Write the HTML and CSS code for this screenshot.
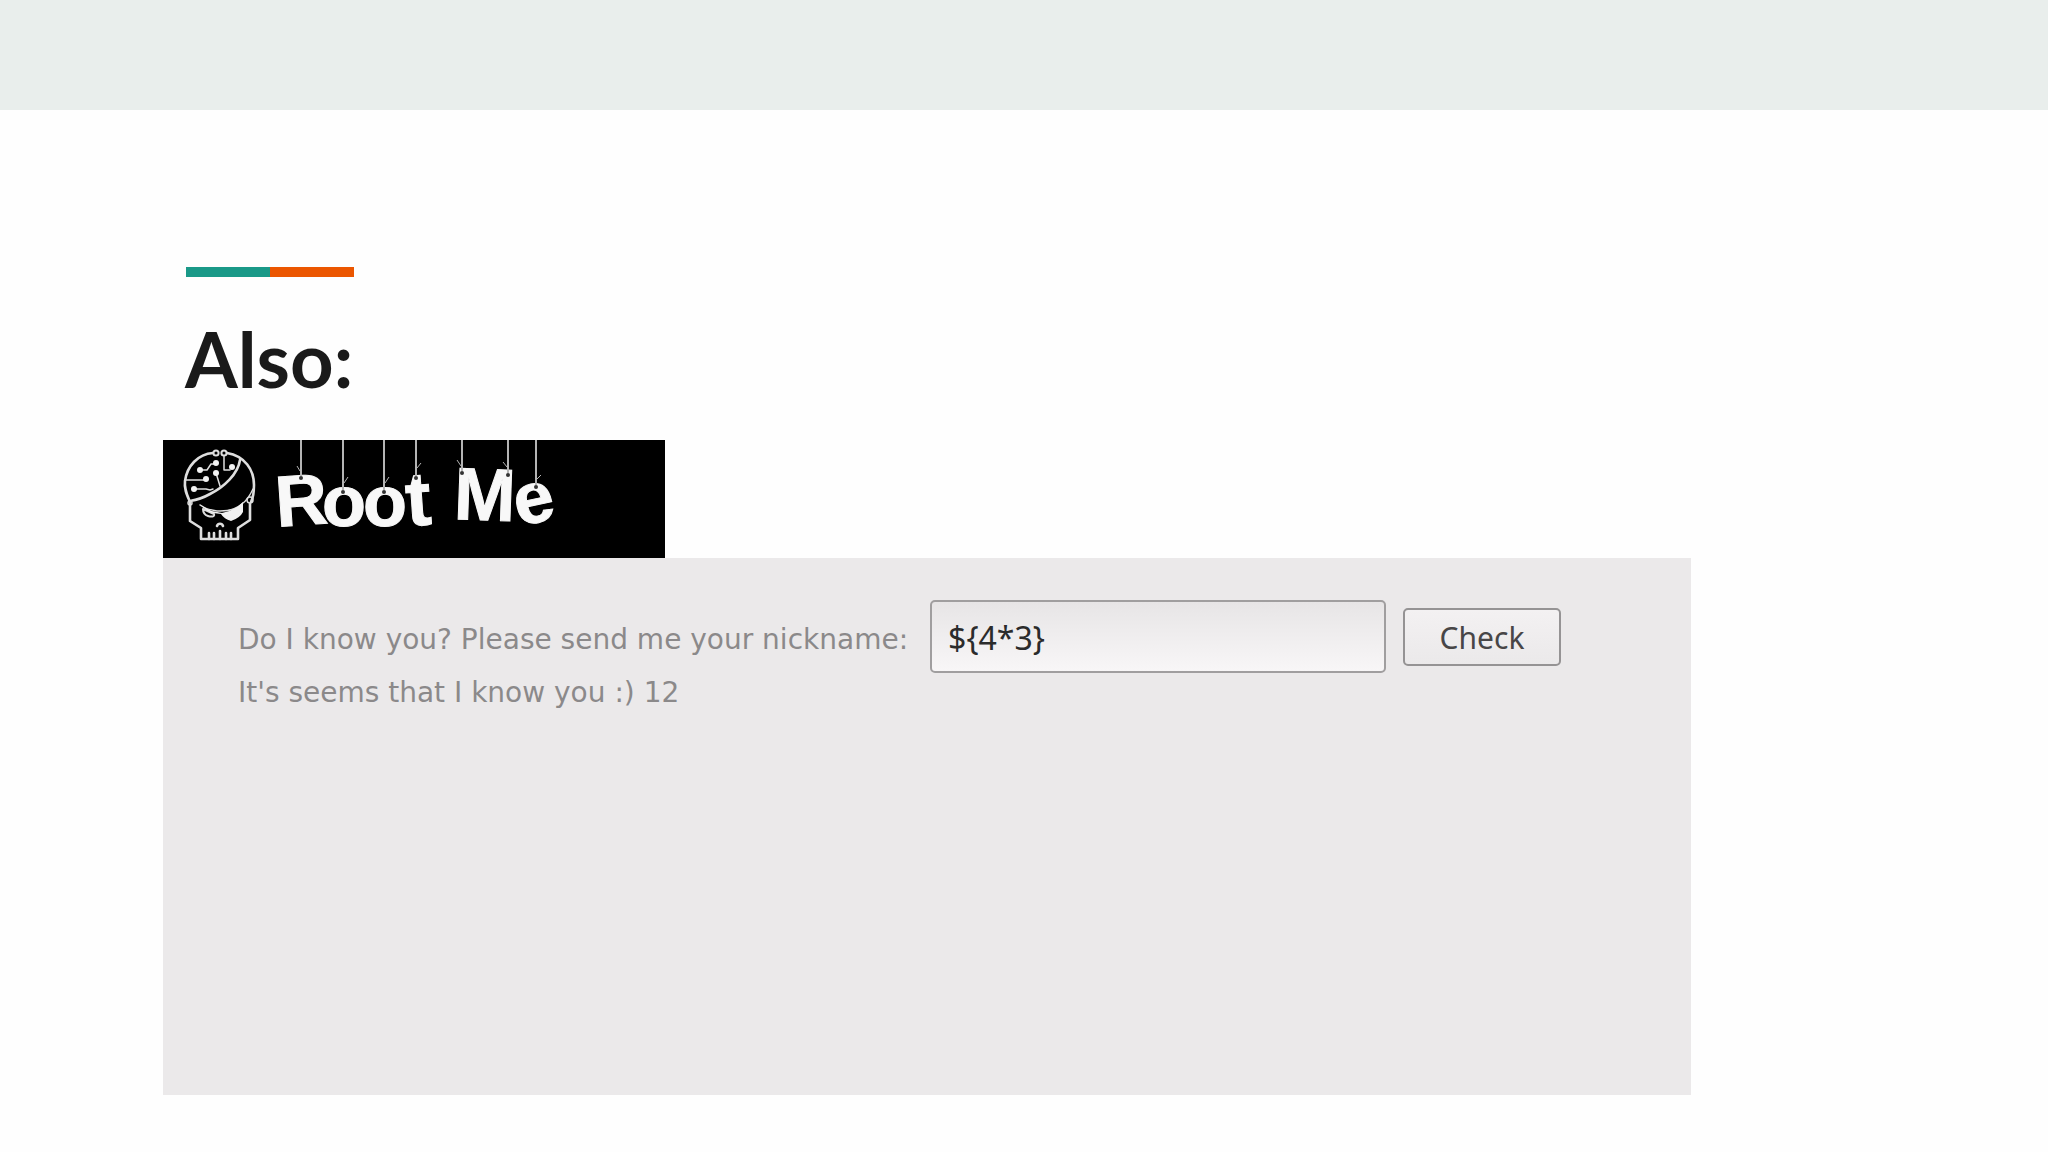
FILE: index.html
```
<!DOCTYPE html>
<html lang="en">
<head>
  <meta charset="UTF-8" />
  <meta name="viewport" content="width=device-width, initial-scale=1.0" />
  <title>Also:</title>
  <link rel="stylesheet" href="styles.css">
</head>
<body>
  <header class="band"></header>

  <main class="slide">
    <div class="accent"></div>
    <h1 class="title">Also:</h1>

    <section class="demo">
      <!-- ======= LOGO ======= -->
      <svg class="logo" viewBox="0 0 502 118" role="img" aria-label="Root Me">
        <rect width="502" height="118" fill="#000" />

        <!-- skull -->
        <g fill="none" stroke="#dedede" stroke-width="2.6" stroke-linejoin="round" stroke-linecap="round">
          <path d="M50 13C35 14 24 26 22 41C21 49 24 55 27 62" />
          <path d="M64 13C82 16 91 30 91 45C91 52 90 58 88 62" />
          <circle cx="53" cy="13" r="2.6" stroke-width="2" />
          <circle cx="61" cy="13" r="2.6" stroke-width="2" />
          <path d="M61 16V30H67" stroke-width="1.5" />
          <path d="M77 20C75 34 61 47 47 54C40 58 33 60 27 61" />
          <path d="M90 49C83 65 70 72 54 71C47 70 41 68 37 65" stroke-width="1.5" />
          <path d="M27 64V81L38 88V99H75V88L87 80V64" />
          <circle cx="27" cy="63" r="2" stroke-width="1.5" />
          <circle cx="87" cy="60" r="3" stroke-width="1.5" />
          <path d="M46 99V93M51 99V93M57 99V91M63 99V93M68 99V93" />
          <path d="M54 86C55 83 59 83 60 86" />
          <path d="M40 69L51 74C52 77 48 77 45 76C42 75 40 73 40 69Z" stroke-width="2" />
          <path d="M36 30H44L48 24H53M23 40H42M31 49H43L47 50L50 49M53 33L57 46" stroke-width="1.5" />
        </g>
        <g fill="#f2f2f2">
          <circle cx="37" cy="30" r="3" />
          <circle cx="53" cy="23" r="3" />
          <circle cx="53" cy="33" r="3" />
          <circle cx="43" cy="39" r="3" />
          <circle cx="31" cy="49" r="3" />
          <circle cx="69" cy="27" r="3" />
          <path d="M37 64Q45 71 54 72L59 73Q71 71 80 62V72Q77 78 68 81Q61 79 58 74L50 73Q42 71 37 64Z" />
        </g>

        <!-- letters hanging on strings -->
        <g class="logo-text">
          <text font-size="72" transform="translate(140 85) rotate(-4)">R</text>
          <text font-size="72" x="181" y="86">o</text>
          <text font-size="72" x="222" y="86">o</text>
          <text font-size="76" transform="translate(257 85) rotate(-4)">t</text>
          <text font-size="74" transform="translate(321 80) rotate(2)">M</text>
          <text font-size="72" transform="translate(375 82) rotate(-12)">e</text>
        </g>
        <g fill="none" stroke="#b4b4b4" stroke-width="2">
          <path d="M138 0V36M180 0V50M221 0V50M253 0V36M299 0V31M345 0V33M373 0V45" />
          <path stroke-width="1" d="M137 31L134 26M181 43L185 37M222 43L226 37M254 28L258 23M298 26L294 20M344 27L340 22M374 39L378 35" />
        </g>
        <g fill="#333">
          <circle cx="138" cy="38" r="2" />
          <circle cx="180" cy="52" r="2" />
          <circle cx="221" cy="52" r="2" />
          <circle cx="253" cy="38" r="2" />
          <circle cx="299" cy="33" r="2" />
          <circle cx="345" cy="35" r="2" />
          <circle cx="373" cy="47" r="2" />
        </g>
      </svg>

      <!-- ======= FORM ======= -->
      <div class="panel">
        <form class="ask">
          <label for="nickname">Do I know you? Please send me your nickname:</label>
          <input type="text" id="nickname" class="field" value="${4*3}" />
          <button type="button" class="btn">Check</button>
        </form>
        <p class="answer">It's seems that I know you :) 12</p>
      </div>
    </section>
  </main>
</body>
</html>
```
FILE: styles.css
```
*,*::before,*::after{box-sizing:border-box;margin:0;padding:0}

body {
  font-family: "DejaVu Sans", sans-serif;
  background: #fefefe;
  color: #8b898a;
}

.band{height:110px;background:#e9eeec}

/* ======= TITLE ======= */
.slide{padding:157px 357px 56px 163px}
.accent{width:168px;height:10px;margin-left:23px;background:linear-gradient(90deg,#1a9988 50%,#eb5600 50%)}
.title {
  margin: 32px 0 31px 22px;
  font-family: Lato, sans-serif;
  font-size: 76px;
  font-weight: 700;
  line-height: 100px;
  color: #1a1a1a;
}

/* ======= LOGO ======= */
.logo{display:block;width:502px;max-width:100%}
.logo-text{font-family:"Liberation Sans",sans-serif;font-weight:700;fill:#f8f8f8;stroke:#f8f8f8;stroke-width:1px;text-anchor:middle}

/* ======= PANEL ======= */
.panel {
  min-height: 537px;
  padding: 42px 130px 42px 75px;
  background: #ebe9ea;
  font-size: 28px;
}
.ask{display:flex;align-items:center}
.ask label{padding-top:6px;white-space:nowrap}
.field {
  flex: 1;
  min-width: 0;
  height: 73px;
  margin: 0 17px 0 22px;
  padding: 2px 16px 0;
  border: 2px solid #a09e9f;
  border-radius: 5px;
  background: linear-gradient(#e7e5e6,#f8f6f7);
  font-family: "Noto Sans", sans-serif;
  font-size: 32px;
  color: #2b2b2b;
}
.btn {
  width: 158px;
  height: 58px;
  padding-top: 2px;
  border: 2px solid #959394;
  border-radius: 5px;
  background: linear-gradient(#f3f1f2,#ebe9ea);
  font-family: "Noto Sans", sans-serif;
  font-size: 30px;
  color: #484647;
}
.answer{margin-top:4px;line-height:32px}
```
